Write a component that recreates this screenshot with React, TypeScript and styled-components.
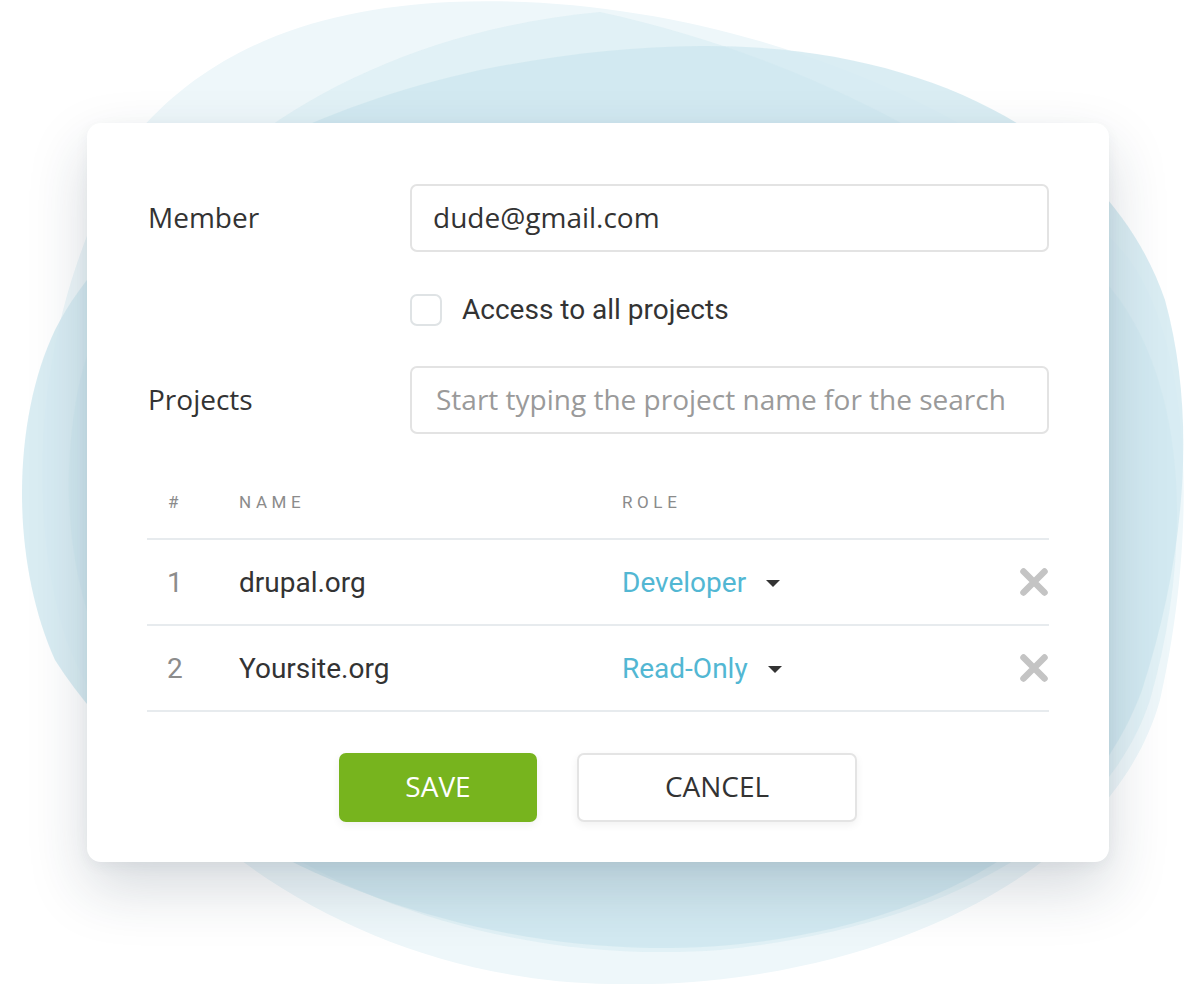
import React from "react";
import styled, { createGlobalStyle } from "styled-components";

const GlobalStyle = createGlobalStyle`
  html, body { margin: 0; padding: 0; background: #ffffff; }
  * { box-sizing: border-box; }
`;

const Page = styled.div`
  position: relative;
  width: 1187px;
  height: 984px;
  overflow: hidden;
  background: #ffffff;
  padding: 123px 0 0 87px;
`;

const Backdrop = styled.svg`
  position: absolute;
  left: 0;
  top: 0;
  width: 1187px;
  height: 984px;
`;

const Card = styled.div`
  position: relative;
  width: 1022px;
  background: #ffffff;
  border-radius: 14px;
  box-shadow: 0 26px 60px rgba(30, 50, 70, 0.18), 0 4px 14px rgba(30, 50, 70, 0.05);
  padding: 61px 60px 40px 60px;
  display: flex;
  flex-direction: column;
`;

const FormRow = styled.div<{ $mt?: number }>`
  display: grid;
  grid-template-columns: 263px 1fr;
  align-items: center;
  margin-top: ${(p) => p.$mt ?? 0}px;
`;

const Label = styled.div`
  font-family: "Open Sans", sans-serif;
  font-size: 28px;
  color: #333333;
  padding-left: 1px;
  padding-bottom: 3px;
`;

const TextInput = styled.div<{ $placeholder?: boolean }>`
  height: 68px;
  border: 2px solid #e3e3e3;
  border-radius: 7px;
  display: flex;
  align-items: center;
  padding: 0 ${(p) => (p.$placeholder ? 24 : 21)}px 3px;
  font-family: "Open Sans", sans-serif;
  font-size: 28px;
  color: ${(p) => (p.$placeholder ? "#9a9a9a" : "#333333")};
  white-space: nowrap;
  overflow: hidden;
`;

const CheckLine = styled.div`
  display: flex;
  align-items: center;
  gap: 20px;
  font-family: Roboto, sans-serif;
  font-size: 28px;
  color: #333333;
`;

const CheckBox = styled.span`
  width: 32px;
  height: 32px;
  border: 2px solid #dfe3e5;
  border-radius: 7px;
  background: #ffffff;
`;

const Table = styled.div`
  margin-top: 56px;
  display: flex;
  flex-direction: column;
`;

const Row = styled.div<{ $head?: boolean }>`
  display: grid;
  grid-template-columns: 92px 383px 1fr 40px;
  align-items: center;
  height: ${(p) => (p.$head ? 50 : 86)}px;
  padding-bottom: ${(p) => (p.$head ? 24 : 0)}px;
  border-bottom: 2px solid #e7ebee;
`;

const HeadCell = styled.div<{ $pl?: number }>`
  font-family: Roboto, sans-serif;
  font-size: 17px;
  letter-spacing: 4.6px;
  color: #8b8b8b;
  padding-left: ${(p) => p.$pl ?? 0}px;
  line-height: 24px;
`;

const NumCell = styled.div`
  font-family: Roboto, sans-serif;
  font-size: 28px;
  color: #8c8c8c;
  padding-left: 20px;
`;

const NameCell = styled.div`
  font-family: Roboto, sans-serif;
  font-size: 28px;
  color: #333333;
`;

const RoleCell = styled.div`
  display: flex;
  align-items: center;
  gap: 20px;
  font-family: Roboto, sans-serif;
  font-size: 28px;
  color: #52b7d3;
`;

const Caret = styled.span`
  width: 0;
  height: 0;
  border-left: 7px solid transparent;
  border-right: 7px solid transparent;
  border-top: 7px solid #333333;
  margin-top: 2px;
`;

const RemoveBtn = styled.div`
  display: flex;
  justify-content: flex-end;
  align-items: center;
`;

const Buttons = styled.div`
  margin-top: 41px;
  display: flex;
  justify-content: center;
  gap: 40px;
`;

const Button = styled.div<{ $primary?: boolean; $w: number }>`
  width: ${(p) => p.$w}px;
  height: 69px;
  border-radius: 7px;
  display: flex;
  align-items: center;
  justify-content: center;
  padding-bottom: 3px;
  font-family: "Open Sans", sans-serif;
  font-size: 28px;
  text-transform: uppercase;
  background: ${(p) => (p.$primary ? "#77b41e" : "#ffffff")};
  color: ${(p) => (p.$primary ? "#ffffff" : "#333333")};
  border: ${(p) => (p.$primary ? "none" : "2px solid #e4e4e4")};
  box-shadow: 0 3px 8px rgba(0, 0, 0, 0.06);
`;

const XIcon = () => (
  <svg width="30" height="30" viewBox="0 0 30 30">
    <path d="M4.5 4.5 L25.5 25.5 M25.5 4.5 L4.5 25.5" stroke="#c4c4c4" strokeWidth="6.5" strokeLinecap="round" />
  </svg>
);

const rows = [
  { n: 1, name: "drupal.org", role: "Developer" },
  { n: 2, name: "Yoursite.org", role: "Read-Only" },
];

export default function App() {
  return (
    <>
      <GlobalStyle />
      <Page>
        <Backdrop viewBox="0 0 1187 984">
          <path
            d="M450 2 C720 -10 1010 110 1130 260 C1200 360 1192 560 1160 700 C1110 880 860 990 610 984 C360 980 140 830 66 640 C22 500 34 300 140 130 C220 40 330 8 450 2 Z"
            fill="#eef7fa"
          />
          <path
            d="M700 46 C930 44 1110 140 1165 300 C1198 420 1184 560 1142 690 C1080 860 880 950 650 948 C420 944 170 840 55 660 C10 560 12 420 55 330 C120 200 300 110 480 70 C560 54 630 47 700 46 Z"
            fill="#d4eaf1"
            opacity="0.85"
          />
          <path
            d="M600 12 C820 60 1020 170 1120 300 C1190 400 1190 560 1150 700 C1100 850 920 930 720 950 C520 965 300 900 170 760 C80 660 50 520 80 380 C120 220 300 40 600 12 Z"
            fill="#c9e4ee"
            opacity="0.35"
          />
        </Backdrop>
        <Card>
          <FormRow>
            <Label>Member</Label>
            <TextInput>dude@gmail.com</TextInput>
          </FormRow>
          <FormRow $mt={41}>
            <span />
            <CheckLine>
              <CheckBox />
              Access to all projects
            </CheckLine>
          </FormRow>
          <FormRow $mt={40}>
            <Label>Projects</Label>
            <TextInput $placeholder>Start typing the project name for the search</TextInput>
          </FormRow>
          <Table>
            <Row $head>
              <HeadCell $pl={21}>#</HeadCell>
              <HeadCell>NAME</HeadCell>
              <HeadCell>ROLE</HeadCell>
              <span />
            </Row>
            {rows.map((r) => (
              <Row key={r.n}>
                <NumCell>{r.n}</NumCell>
                <NameCell>{r.name}</NameCell>
                <RoleCell>
                  {r.role}
                  <Caret />
                </RoleCell>
                <RemoveBtn>
                  <XIcon />
                </RemoveBtn>
              </Row>
            ))}
          </Table>
          <Buttons>
            <Button $primary $w={198}>Save</Button>
            <Button $w={280}>Cancel</Button>
          </Buttons>
        </Card>
      </Page>
    </>
  );
}
